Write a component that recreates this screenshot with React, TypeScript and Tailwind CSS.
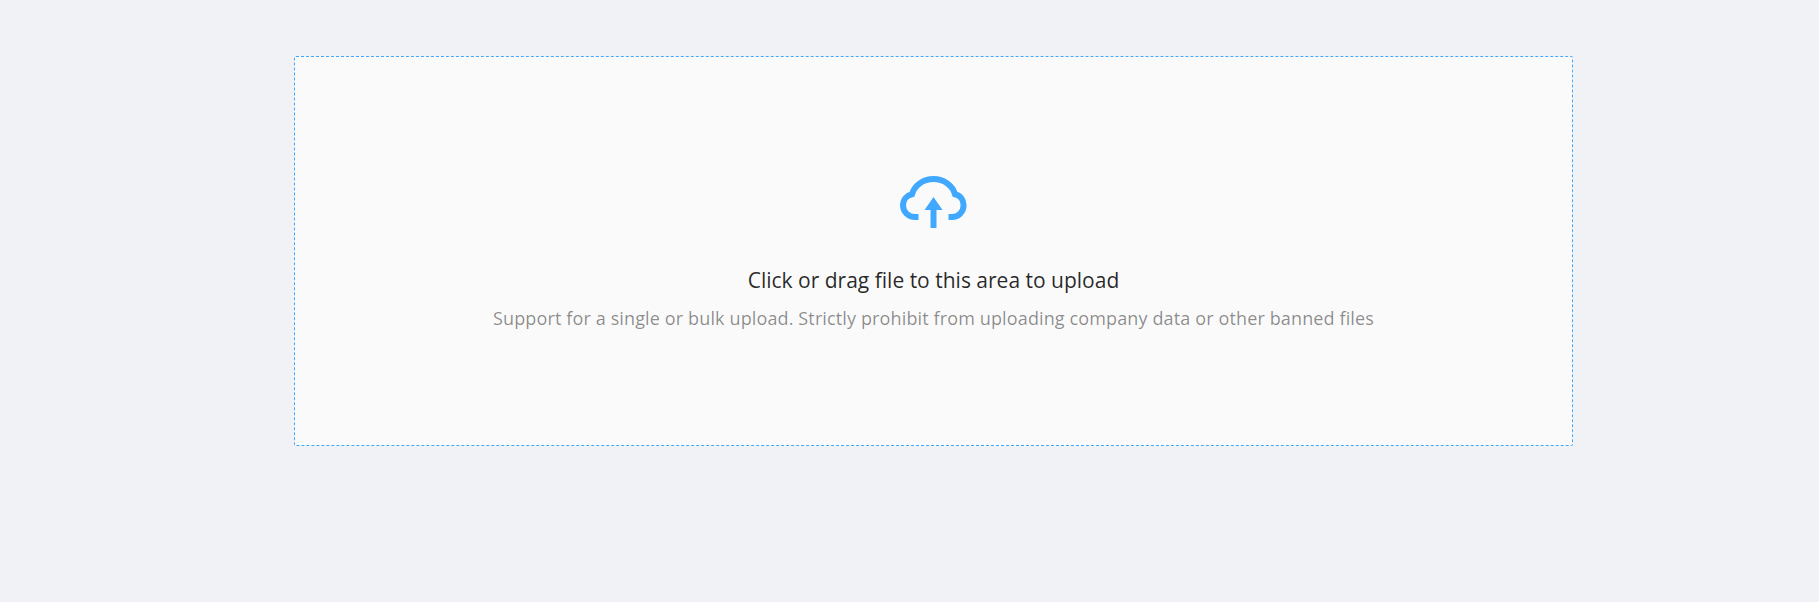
import React from "react";

const CloudUpload = () => (
  <svg width="70" height="54" viewBox="0 0 70 54" fill="none">
    {/* cloud outline */}
    <path
      d="M19.5 41H16C9.3 41 4 35.8 4 29.3C4 23.8 7.8 19.3 13 18.2C15.5 9.5 24 3 34.5 3C45 3 53.5 9.5 56 18.2C61.2 19.3 64.6 23.8 64.6 29.3C64.6 35.8 59.5 41 53 41H49.5"
      stroke="#40a9ff"
      strokeWidth="6"
    />
    {/* arrow */}
    <path d="M34.5 21L43.5 34H37.5V52H31.5V34H25.5Z" fill="#40a9ff" />
  </svg>
);

const App = () => {
  return (
    // wrapper
    <div className="min-h-[602px] bg-[#f0f2f5] pt-[56px] pl-[294px] font-['Open_Sans','Liberation_Sans',sans-serif]">
      {/* dragger */}
      <div className="flex h-[390px] w-[1279px] flex-col items-center rounded-[2px] border border-dashed border-[#40a9ff] bg-[#fafafa] pt-[119px]">
        <CloudUpload />
        <p className="mt-[35px] text-[21px] leading-[31px] text-[rgba(0,0,0,0.85)]">
          Click or drag file to this area to upload
        </p>
        <p className="mt-[9px] text-[18px] leading-[27px] tracking-[0.13px] text-[rgba(0,0,0,0.45)]">
          Support for a single or bulk upload. Strictly prohibit from uploading company data or other banned files
        </p>
      </div>
    </div>
  );
};

export default App;
